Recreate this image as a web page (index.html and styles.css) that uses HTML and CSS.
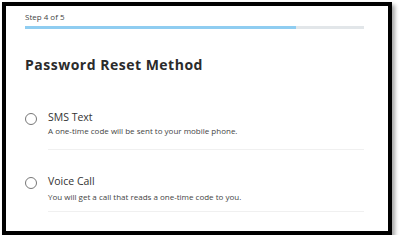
FILE: index.html
```html
<!DOCTYPE html>
<html lang="en">
<head>
    <meta charset="UTF-8">
    <meta name="viewport" content="width=device-width, initial-scale=1.0">
    <title>Password Reset Method</title>
    <link rel="stylesheet" href="styles.css">
</head>
<body>
    <div class="frame">
        <div class="step">Step 4 of 5</div>
        <div class="progress">
            <div class="progress-fill"></div>
        </div>

        <h1>Password Reset Method</h1>

        <label class="option">
            <span class="radio"></span>
            <span class="option-text">
                <span class="option-title">SMS Text</span>
                <span class="option-desc">A one-time code will be sent to your mobile phone.</span>
            </span>
        </label>

        <label class="option">
            <span class="radio"></span>
            <span class="option-text">
                <span class="option-title">Voice Call</span>
                <span class="option-desc">You will get a call that reads a one-time code to you.</span>
            </span>
        </label>
    </div>
</body>
</html>
```

FILE: styles.css
```css
body {
    background-color: #ffffff;
    margin: 0;
    font-family: "Open Sans", "Noto Sans", sans-serif;
    color: #333;
}

.frame {
    width: 390px;
    height: 233px;
    margin: 2px 0 0 2px;
    border: 4px solid #000;
    box-shadow: 3px 3px 4px rgba(0, 0, 0, 0.35);
    background-color: #fff;
    padding: 0 24px 0 19px;
    box-sizing: border-box;
}

.step {
    font-size: 8px;
    color: #444;
    padding-top: 5px;
    line-height: 12px;
}

.progress {
    height: 3px;
    background-color: #e2e6e9;
    margin-top: 3px;
}

.progress-fill {
    width: 80%;
    height: 100%;
    background-color: #8fcdf1;
}

h1 {
    font-size: 14px;
    font-weight: 700;
    letter-spacing: 0.5px;
    color: #2b2b2b;
    margin: 26px 0 0 0;
    line-height: 20px;
}

.option {
    display: flex;
    align-items: flex-start;
    margin-top: 36px;
}

.option + .option {
    margin-top: 25px;
}

.option + .option .option-desc {
    margin-top: 3px;
}

.option + .option .option-text {
    padding-bottom: 8px;
}

.radio {
    width: 10px;
    height: 10px;
    border: 1px solid #777;
    border-radius: 50%;
    margin: 2px 11px 0 0;
    flex-shrink: 0;
}

.option-text {
    flex: 1;
    display: flex;
    flex-direction: column;
    border-bottom: 1px solid #f0f0f0;
    padding-bottom: 12px;
}

.option-title {
    font-size: 10.5px;
    line-height: 13px;
    color: #333;
}

.option-desc {
    font-size: 8px;
    line-height: 12px;
    color: #444;
    margin-top: 1px;
}
```
